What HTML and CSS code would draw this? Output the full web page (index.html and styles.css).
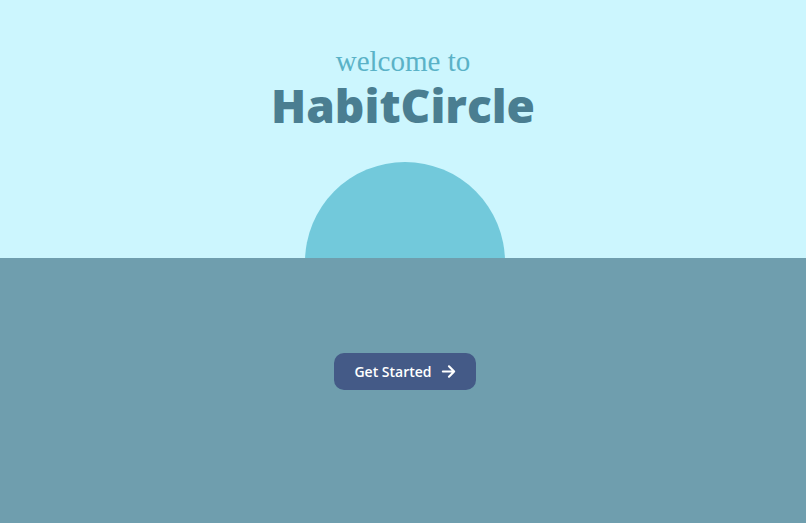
FILE: index.html
```html
<!DOCTYPE html>
<html>
<head>
<meta charset="utf-8">
<link rel="stylesheet" href="styles.css">
</head>
<body>
<section class="hero">
  <p class="welcome">welcome to</p>
  <h1 class="title">HabitCircle</h1>
  <div class="sun"></div>
</section>
<section class="ground">
  <button class="start">Get Started
    <svg class="arrow" width="15" height="15" viewBox="0 0 16 16" fill="none" stroke="#ffffff" stroke-width="2.3" stroke-linecap="round" stroke-linejoin="round"><path d="M2 8h12M8.5 2.5L14 8l-5.5 5.5"/></svg>
  </button>
</section>
</body>
</html>
```
FILE: styles.css
```css
html, body { margin: 0; padding: 0; }
body { width: 806px; height: 523px; overflow: hidden; font-family: "Open Sans", sans-serif; }
.hero {
  height: 258px;
  background: #ccf6fe;
  display: flex;
  flex-direction: column;
  align-items: center;
  overflow: hidden;
  padding-top: 44px;
  box-sizing: border-box;
}
.welcome {
  margin: 0;
  font-family: "Liberation Serif", "DejaVu Serif", serif;
  font-size: 29px;
  line-height: 34px;
  color: #5ab2c7;
}
.title {
  margin: 0;
  font-family: "Open Sans", sans-serif;
  font-weight: 800;
  font-size: 46px;
  line-height: 54px;
  color: #4a7e91;
}
.sun {
  width: 200px;
  height: 200px;
  border-radius: 50%;
  background: #72c9db;
  margin-top: 30px;
  margin-left: 3px;
  flex-shrink: 0;
}
.ground {
  height: 265px;
  background: #6f9eae;
  display: flex;
  justify-content: center;
  padding-top: 95px;
  padding-left: 4px;
  box-sizing: border-box;
}
.start {
  width: 142px;
  height: 37px;
  border: none;
  border-radius: 10px;
  background: #445a87;
  color: #ffffff;
  font-family: "Open Sans", sans-serif;
  font-weight: 600;
  font-size: 14px;
  display: flex;
  align-items: center;
  justify-content: center;
  gap: 9px;
  padding: 0;
}
.arrow { display: block; }
```
